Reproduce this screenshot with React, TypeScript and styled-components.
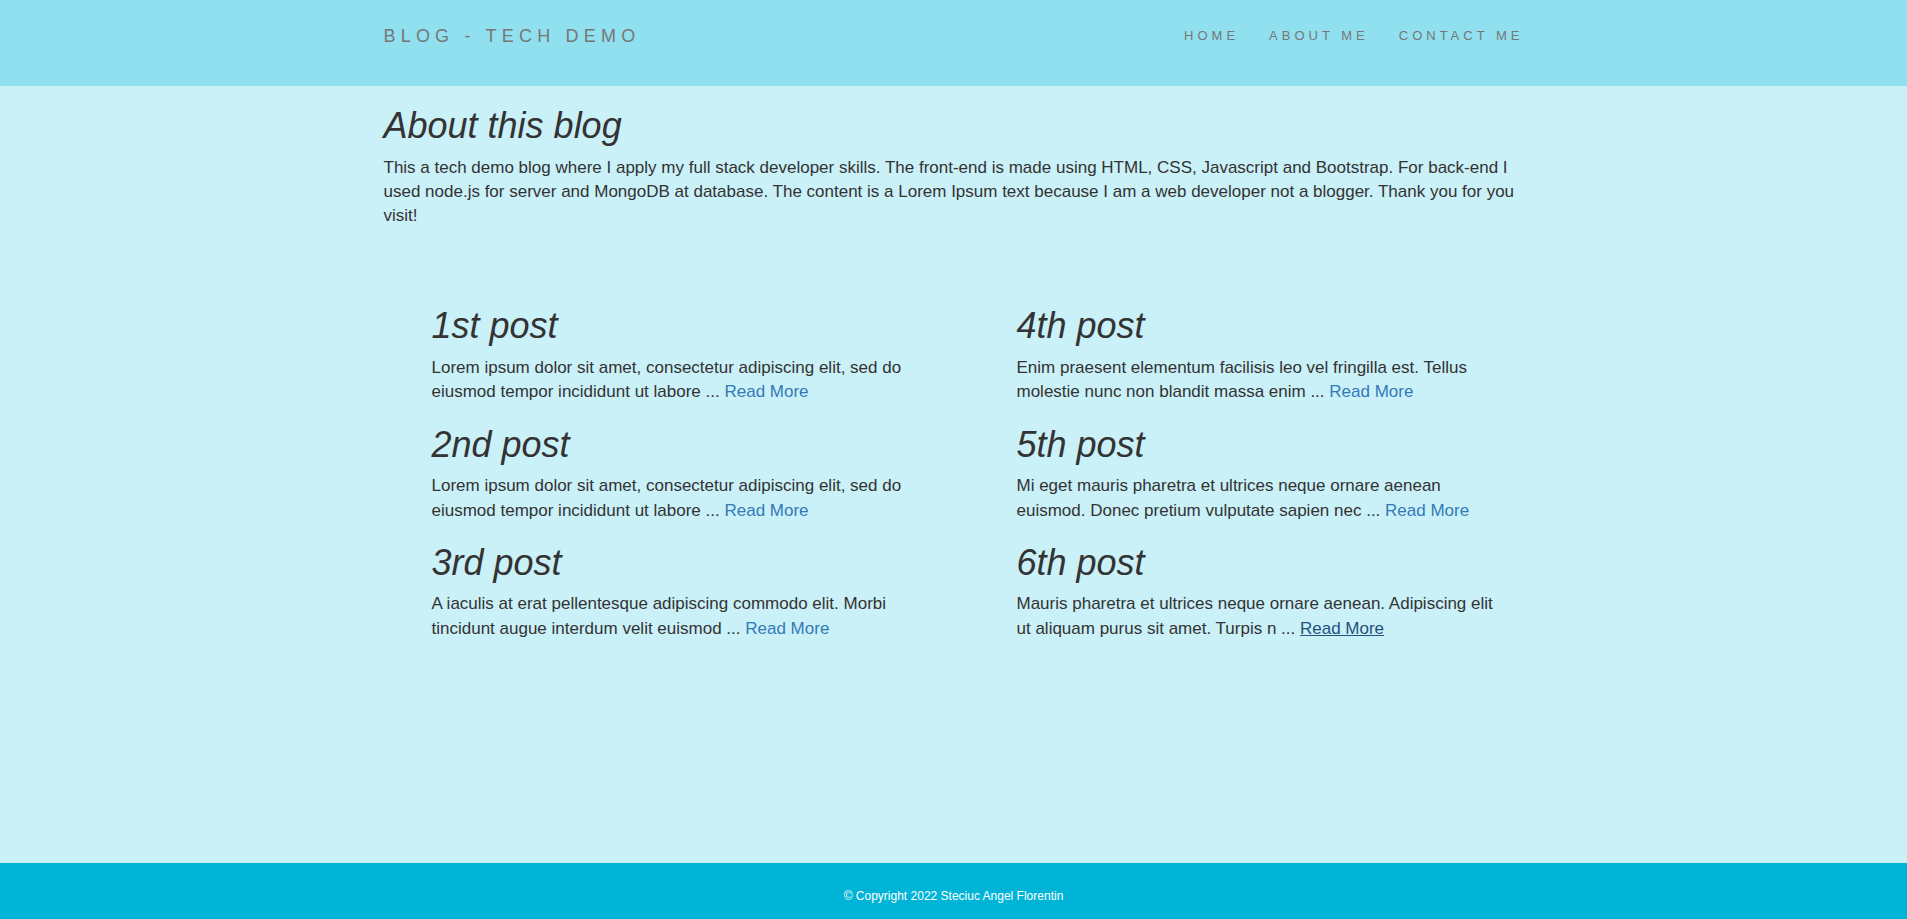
import React from "react";
import styled, { createGlobalStyle, css } from "styled-components";

const GlobalStyle = createGlobalStyle`
  html, body { margin: 0; padding: 0; }
  body {
    font-family: "Liberation Sans", Arial, Helvetica, sans-serif;
    font-size: 17px;
    line-height: 1.42857;
    color: #333;
    background: #caf0f8;
  }
  * { box-sizing: border-box; }
`;

const Page = styled.div`
  min-height: 100vh;
  display: flex;
  flex-direction: column;
  background: #caf0f8;
`;

const Header = styled.header`
  background: #90e0ef;
  height: 86px;
`;

const HeaderInner = styled.div`
  width: 1140px;
  margin: 0 auto;
  padding-top: 26px;
  display: flex;
  justify-content: space-between;
  align-items: flex-start;
`;

const Brand = styled.a`
  font-size: 18px;
  line-height: 20px;
  letter-spacing: 5.2px;
  color: #777;
  text-decoration: none;
`;

const Nav = styled.nav`
  display: flex;
  margin-right: -15px;
`;

const NavLink = styled.a`
  font-size: 13px;
  line-height: 20px;
  letter-spacing: 4px;
  color: #777;
  text-decoration: none;
  padding: 0 15px;
`;

const Main = styled.main`
  flex: 1;
  width: 1140px;
  margin: 0 auto;
`;

const Title = styled.h1`
  font-size: 36px;
  font-style: italic;
  font-weight: 500;
  line-height: 1.1;
  margin: 20px 0 10px;
`;

const Text = styled.p`
  margin: 0 0 10px;
  font-size: 17px;
  line-height: 24.3px;
`;

const PostGrid = styled.section`
  width: 1170px;
  margin-top: 58px;
  display: grid;
  grid-template-columns: 585px 585px;
`;

const Column = styled.div`
  padding: 0 48px;
`;

const Post = styled.article``;

const ReadMore = styled.a<{ $hovered?: boolean }>`
  color: #337ab7;
  text-decoration: none;
  ${(p) =>
    p.$hovered &&
    css`
      color: #23527c;
      text-decoration: underline;
    `}
`;

const Footer = styled.footer`
  height: 56px;
  background: #00b4d8;
  padding-top: 25px;
  text-align: center;
  font-size: 12px;
  line-height: 17px;
  color: #fff;
`;

type PostData = { title: string; text: string; hovered?: boolean };

const left: PostData[] = [
  { title: "1st post", text: "Lorem ipsum dolor sit amet, consectetur adipiscing elit, sed do eiusmod tempor incididunt ut labore" },
  { title: "2nd post", text: "Lorem ipsum dolor sit amet, consectetur adipiscing elit, sed do eiusmod tempor incididunt ut labore" },
  { title: "3rd post", text: "A iaculis at erat pellentesque adipiscing commodo elit. Morbi tincidunt augue interdum velit euismod" },
];

const right: PostData[] = [
  { title: "4th post", text: "Enim praesent elementum facilisis leo vel fringilla est. Tellus molestie nunc non blandit massa enim" },
  { title: "5th post", text: "Mi eget mauris pharetra et ultrices neque ornare aenean euismod. Donec pretium vulputate sapien nec" },
  { title: "6th post", text: "Mauris pharetra et ultrices neque ornare aenean. Adipiscing elit ut aliquam purus sit amet. Turpis n", hovered: true },
];

const PostItem = ({ p }: { p: PostData }) => (
  <Post>
    <Title>{p.title}</Title>
    <Text>
      {p.text} ... <ReadMore href="#" $hovered={p.hovered}>Read More</ReadMore>
    </Text>
  </Post>
);

export default function App() {
  return (
    <>
      <GlobalStyle />
      <Page>
        <Header>
          <HeaderInner>
            <Brand href="#">BLOG - TECH DEMO</Brand>
            <Nav>
              <NavLink href="#">HOME</NavLink>
              <NavLink href="#">ABOUT ME</NavLink>
              <NavLink href="#">CONTACT ME</NavLink>
            </Nav>
          </HeaderInner>
        </Header>
        <Main>
          <Title>About this blog</Title>
          <Text>
            This a tech demo blog where I apply my full stack developer skills. The front-end is made using HTML, CSS,
            Javascript and Bootstrap. For back-end I used node.js for server and MongoDB at database. The content is a
            Lorem Ipsum text because I am a web developer not a blogger. Thank you for you visit!
          </Text>
          <PostGrid>
            <Column>
              {left.map((p) => (
                <PostItem key={p.title} p={p} />
              ))}
            </Column>
            <Column>
              {right.map((p) => (
                <PostItem key={p.title} p={p} />
              ))}
            </Column>
          </PostGrid>
        </Main>
        <Footer>© Copyright 2022 Steciuc Angel Florentin</Footer>
      </Page>
    </>
  );
}
